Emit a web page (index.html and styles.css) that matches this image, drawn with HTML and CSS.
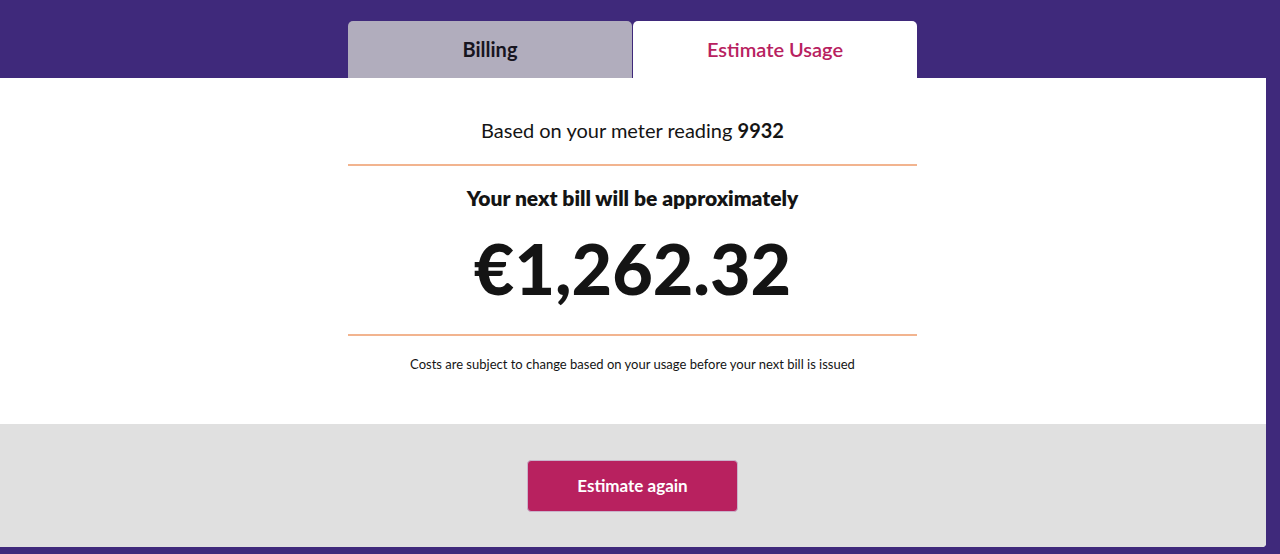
FILE: index.html
```html
<!DOCTYPE html>
<html lang="en">
<head>
    <meta charset="UTF-8">
    <meta name="viewport" content="width=device-width, initial-scale=1.0">
    <title>Estimate Usage</title>
    <link rel="stylesheet" href="styles.css">
</head>
<body>
    <div class="page">
        <!-- Tabs sit on the purple header -->
        <div class="tabs">
            <div class="tab">Billing</div>
            <div class="tab active">Estimate Usage</div>
        </div>

        <div class="card">
            <div class="result">
                <p class="reading">Based on your meter reading <b>9932</b></p>
                <div class="rule"></div>
                <h2 class="next-bill">Your next bill will be approximately</h2>
                <div class="amount">€1,262.32</div>
                <div class="rule rule-low"></div>
                <p class="note">Costs are subject to change based on your usage before your next bill is issued</p>
            </div>
            <div class="actions">
                <button class="btn">Estimate again</button>
            </div>
        </div>
    </div>
</body>
</html>
```

FILE: styles.css
```css
/* Reset default margin and padding for body */
body {
    margin: 0;
    padding: 0;
    background: #3f297b;
    font-family: Lato, "Open Sans", sans-serif;
    color: #141414;
}

.page {
    padding-top: 21px;
    padding-bottom: 7px;
    padding-right: 14px;
}

.tabs {
    display: flex;
    justify-content: center;
    gap: 1px;
    margin-right: 1px;
}

.tab {
    width: 284px;
    height: 57px;
    padding-bottom: 2px;
    box-sizing: border-box;
    display: flex;
    align-items: center;
    justify-content: center;
    background: #b1adbd;
    border-radius: 5px 5px 0 0;
    font-size: 20px;
    font-weight: 700;
    color: #17151f;
}

.tab.active {
    background: #ffffff;
    color: #b8215f;
    font-weight: 600;
}

.card {
    background: #ffffff;
    border-radius: 0 0 4px 0;
    overflow: hidden;
}

.result {
    width: 569px;
    margin: 0 calc(50% - 284px) 0 calc(50% - 285px);
    padding-top: 40px;
    height: 306px;
    text-align: center;
}

.reading {
    margin: 0;
    font-size: 20px;
    line-height: 24px;
}

.reading b {
    font-weight: 700;
}

.rule {
    height: 2px;
    background: #f2b48f;
    margin-top: 22px;
}

.next-bill {
    margin: 19px 0 0;
    font-size: 21px;
    line-height: 26px;
    font-weight: 800;
}

.amount {
    margin-top: 18px;
    font-size: 70px;
    line-height: 78px;
    font-weight: 900;
}

.rule-low {
    margin-top: 27px;
}

.note {
    margin: 19px 0 0;
    font-size: 13px;
    line-height: 18px;
}

.actions {
    background: #e0e0e0;
    height: 123px;
    display: flex;
    align-items: center;
    justify-content: center;
}

.btn {
    width: 211px;
    height: 52px;
    margin-right: 1px;
    background: #b8215f;
    color: #ffffff;
    border: 1px solid #c9b3cb;
    border-radius: 4px;
    font-family: inherit;
    font-size: 17px;
    font-weight: 700;
    cursor: pointer;
}
```
